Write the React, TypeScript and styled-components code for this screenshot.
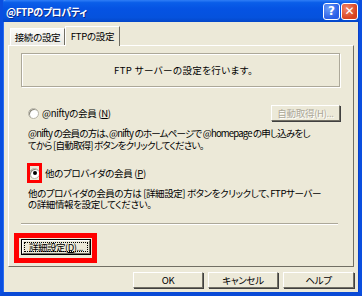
import React from "react";
import styled, { createGlobalStyle } from "styled-components";

const Global = createGlobalStyle`
  html, body { margin: 0; padding: 0; background: #ece9d8; }
  body { font-family: "Noto Sans CJK JP", "Noto Sans", sans-serif; }
  * { box-sizing: border-box; }
`;

const Window = styled.div`
  width: 362px;
  height: 296px;
  overflow: hidden;
  display: flex;
  flex-direction: column;
  background: #ece9d8;
  border-left: 3px solid #0a4fe0;
  border-right: 3px solid #0a4fe0;
  border-bottom: 4px solid #0a4ad6;
  box-shadow: inset 1px 0 0 #2a6cf0, inset -1px 0 0 #0840c8;
`;

const TitleBar = styled.div`
  height: 22px;
  flex: none;
  margin: 0 -3px;
  padding: 0 4px 0 6px;
  display: flex;
  align-items: center;
  background: linear-gradient(
    to bottom,
    #2f7ef6 0%,
    #0a5ee9 12%,
    #0553e3 40%,
    #0552dd 80%,
    #0447c9 100%
  );
  border-radius: 6px 6px 0 0;
`;

const Title = styled.div`
  flex: 1;
  color: #fff;
  font-weight: bold;
  font-size: 10px;
  letter-spacing: -0.4px;
  font-feature-settings: "palt";
  text-shadow: 1px 1px 0 #0a2a8a;
`;

const TitleButtons = styled.div`
  display: flex;
  gap: 1px;
`;

const CaptionButton = styled.div<{ $kind: "help" | "close" }>`
  width: 17px;
  height: 17px;
  border: 1px solid #fff;
  border-radius: 3px;
  display: flex;
  align-items: center;
  justify-content: center;
  color: #fff;
  font-family: "DejaVu Sans", sans-serif;
  font-weight: bold;
  font-size: 12px;
  background: ${(p) =>
    p.$kind === "help"
      ? "radial-gradient(circle at 30% 30%, #6a9cf8, #2a5fe6 70%)"
      : "radial-gradient(circle at 30% 30%, #f0856a, #d8421e 70%)"};
`;

const Body = styled.div`
  flex: 1;
  min-width: 0;
  min-height: 0;
  display: flex;
  flex-direction: column;
  padding: 4px 5px 4px 5px;
  font-size: 9.5px;
  letter-spacing: -0.3px;
  color: #000;
  font-feature-settings: "palt";
`;

const TabStrip = styled.div`
  display: flex;
  align-items: flex-end;
  height: 19px;
  flex: none;
  padding-left: 2px;
  position: relative;
  z-index: 1;
`;

const Tab = styled.div<{ $active?: boolean }>`
  height: ${(p) => (p.$active ? "20px" : "17px")};
  margin-bottom: ${(p) => (p.$active ? "-1px" : "0")};
  width: 55px;
  flex: none;
  white-space: nowrap;
  display: flex;
  align-items: center;
  justify-content: center;
  padding-bottom: ${(p) => (p.$active ? "2px" : "0")};
  background: ${(p) => (p.$active ? "#ece9d8" : "linear-gradient(#fbfbf8, #ebeae3)")};
  border-top: 1px solid #fff;
  border-left: 1px solid #fff;
  border-right: 1px solid #716f64;
`;

const Panel = styled.div`
  flex: 1;
  min-width: 0;
  display: flex;
  flex-direction: column;
  border-top: 1px solid #fff;
  border-left: 1px solid #fff;
  border-right: 1px solid #716f64;
  border-bottom: 1px solid #716f64;
  padding: 7px 13px 0 12px;
`;

const IntroBox = styled.div`
  height: 34px;
  flex: none;
  display: flex;
  align-items: center;
  justify-content: center;
  letter-spacing: 0.4px;
  border: 1px solid #aca899;
  box-shadow: 1px 1px 0 #fff, inset 1px 1px 0 #fff;
  padding-left: 6px;
`;

const OptionRow = styled.div<{ $top: number }>`
  margin-top: ${(p) => p.$top}px;
  display: flex;
  align-items: center;
  justify-content: space-between;
`;

const RadioLabel = styled.label<{ $indent: number }>`
  display: flex;
  align-items: center;
  gap: 3px;
  padding-left: ${(p) => p.$indent}px;
`;

const Radio = styled.span<{ $checked?: boolean }>`
  width: 11px;
  height: 11px;
  border-radius: 50%;
  background: #fff;
  border: 1px solid #b6b3a6;
  box-shadow: inset 1px 1px 0 #8c8a7c;
  display: flex;
  align-items: center;
  justify-content: center;
  flex: none;
  &::after {
    content: "";
    display: ${(p) => (p.$checked ? "block" : "none")};
    width: 4px;
    height: 4px;
    border-radius: 50%;
    background: #000;
  }
`;

const RedMark = styled.span`
  display: flex;
  align-items: center;
  justify-content: center;
  width: 15px;
  height: 20px;
  border: 3px solid #ff0000;
  overflow: hidden;
  flex: none;
`;

const Underline = styled.span`
  text-decoration: underline;
`;

const Description = styled.div<{ $top: number; $spacing: number }>`
  margin-top: ${(p) => p.$top}px;
  padding-left: 7px;
  display: flex;
  flex-direction: column;
  letter-spacing: ${(p) => p.$spacing}px;
`;

const Line = styled.div<{ $h: number }>`
  height: ${(p) => p.$h}px;
  line-height: ${(p) => p.$h}px;
  white-space: nowrap;
`;

const Separator = styled.div`
  margin-top: 13px;
  height: 2px;
  flex: none;
  margin-right: 2px;
  border-top: 1px solid #aca899;
  border-bottom: 1px solid #fff;
`;

const ClassicButton = styled.div<{ $disabled?: boolean; $w: number }>`
  width: ${(p) => p.$w}px;
  height: 16px;
  flex: none;
  display: flex;
  align-items: center;
  justify-content: center;
  white-space: nowrap;
  background: #ece9d8;
  border-top: 1px solid #fff;
  border-left: 1px solid #fff;
  border-right: 1px solid #716f64;
  border-bottom: 1px solid #716f64;
  box-shadow: 1px 1px 0 #404040;
  color: ${(p) => (p.$disabled ? "#aca899" : "#000")};
  text-shadow: ${(p) => (p.$disabled ? "1px 1px 0 #fff" : "none")};
`;

const RedFrame = styled.div`
  margin-top: 8px;
  margin-left: -7px;
  width: 83px;
  height: 30px;
  flex: none;
  border: 5px solid #ff0000;
  padding: 1px 0 0 2px;
`;

const DefaultButton = styled.div`
  width: 70px;
  height: 16px;
  border: 1px solid #000;
  background: #ece9d8;
  display: flex;
`;

const FocusRect = styled.div`
  flex: 1;
  display: flex;
  align-items: center;
  justify-content: center;
  white-space: nowrap;
  letter-spacing: -0.5px;
  border-top: 1px solid #fff;
  border-left: 1px solid #fff;
  border-right: 1px solid #716f64;
  border-bottom: 1px solid #716f64;
  outline: 1px dotted #000;
  outline-offset: -3px;
`;

const Footer = styled.div`
  margin-top: 5px;
  flex: none;
  display: flex;
  justify-content: flex-end;
  gap: 5px;
`;

export default function App() {
  return (
    <>
      <Global />
      <Window>
        <TitleBar>
          <Title>@FTPのプロパティ</Title>
          <TitleButtons>
            <CaptionButton $kind="help">?</CaptionButton>
            <CaptionButton $kind="close">✕</CaptionButton>
          </TitleButtons>
        </TitleBar>
        <Body>
          <TabStrip>
            <Tab>接続の設定</Tab>
            <Tab $active>FTPの設定</Tab>
          </TabStrip>
          <Panel>
            <IntroBox>FTP サーバーの設定を行います。</IntroBox>
            <OptionRow $top={18}>
              <RadioLabel $indent={7}>
                <Radio />
                <span>
                  @niftyの会員 (<Underline>N</Underline>)
                </span>
              </RadioLabel>
              <ClassicButton $disabled $w={69}>
                自動取得(H)...
              </ClassicButton>
            </OptionRow>
            <Description $top={6} $spacing={-0.8}>
              <Line $h={12}>
                @nifty の会員の方は、@nifty のホームページで @homepage の申し込みをし
              </Line>
              <Line $h={12}>てから [自動取得] ボタンをクリックしてください。</Line>
            </Description>
            <OptionRow $top={12}>
              <RadioLabel $indent={6}>
                <RedMark>
                  <Radio $checked />
                </RedMark>
                <span>
                  他のプロバイダの会員 (<Underline>P</Underline>)
                </span>
              </RadioLabel>
            </OptionRow>
            <Description $top={5} $spacing={-0.4}>
              <Line $h={11}>
                他のプロバイダの会員の方は [詳細設定] ボタンをクリックして、FTPサーバー
              </Line>
              <Line $h={11}>の詳細情報を設定してください。</Line>
            </Description>
            <Separator />
            <RedFrame>
              <DefaultButton>
                <FocusRect>
                  詳細設定(<Underline>D</Underline>)...
                </FocusRect>
              </DefaultButton>
            </RedFrame>
          </Panel>
          <Footer>
            <ClassicButton $w={70}>OK</ClassicButton>
            <ClassicButton $w={70}>キャンセル</ClassicButton>
            <ClassicButton $w={71}>ヘルプ</ClassicButton>
          </Footer>
        </Body>
      </Window>
    </>
  );
}
